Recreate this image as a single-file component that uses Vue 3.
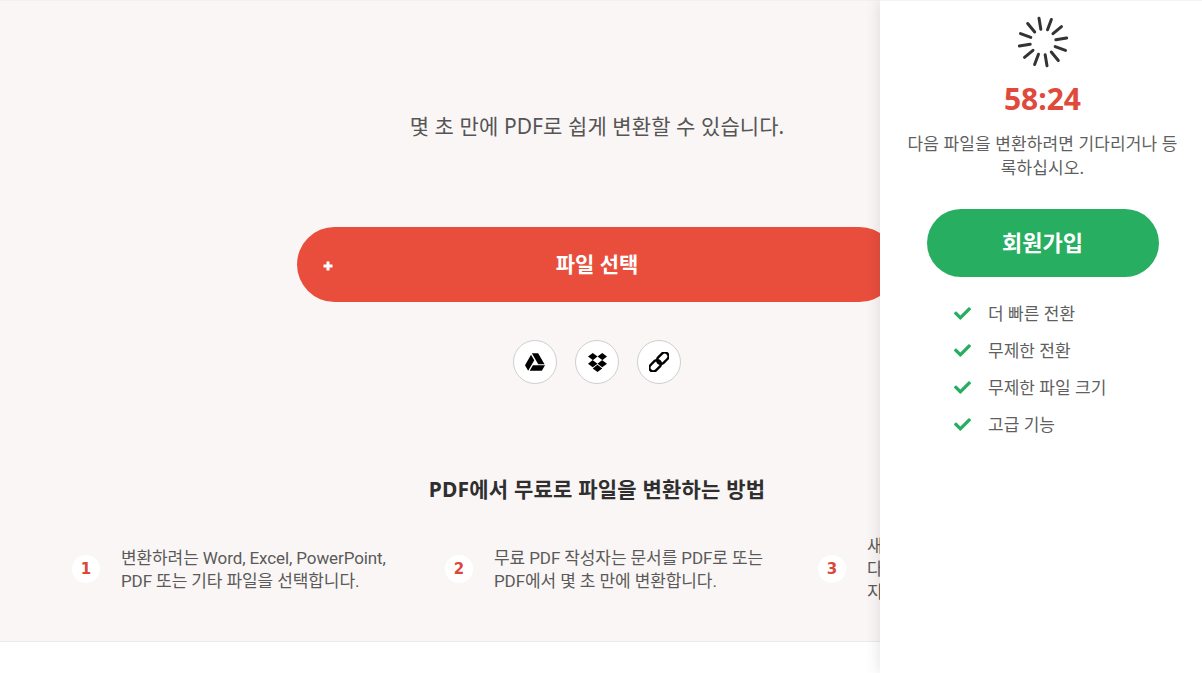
<script setup>
const ticks = Array.from({ length: 12 }, (_, i) => -9.6 + i * 30)
const steps = [
  { n: 1, lines: ['변환하려는 Word, Excel, PowerPoint,', 'PDF 또는 기타 파일을 선택합니다.'] },
  { n: 2, lines: ['무료 PDF 작성자는 문서를 PDF로 또는', 'PDF에서 몇 초 만에 변환합니다.'] },
  { n: 3, lines: ['새 문서를 컴퓨터에 저장하거나', '다른 사람과 공유하거나 드라이브에', '지금 바로 저장하십시오.'] }
]
const perks = ['더 빠른 전환', '무제한 전환', '무제한 파일 크기', '고급 기능']
</script>

<template>
  <div class="page">
    <section class="hero">
      <p class="sub">몇 초 만에 PDF로 쉽게 변환할 수 있습니다.</p>
      <button class="choose">
        <svg class="plus" viewBox="0 0 10 10"><path d="M5 .5v9M.5 5h9" /></svg>
        <span>파일 선택</span>
      </button>
      <div class="sources">
        <a class="src">
          <svg viewBox="0 0 512 512" width="20" height="20"><path d="M339 314.9L175.4 32h161.2l163.6 282.9H339zm-137.5 23.6L120.9 480h310.5L512 338.5H201.5zM154.1 67.4L0 338.5 80.6 480 237 208.8 154.1 67.4z" /></svg>
        </a>
        <a class="src">
          <svg viewBox="0 32 528 448" width="19" height="19" preserveAspectRatio="none"><path d="M264.4 116.3l-132 84.3 132 84.3-132 84.3L0 284.1l132.3-84.3L0 116.3 132.3 32l132.1 84.3zM131.6 395.7l132-84.3 132 84.3-132 84.3-132-84.3zm132.8-111.6l132-84.3-132-83.6L395.7 32 528 116.3l-132.3 84.3L528 284.8l-132.3 84.3-131.3-85z" /></svg>
        </a>
        <a class="src">
          <svg class="chain" viewBox="0 0 20 20" width="20" height="20">
            <rect x="-0.3" y="10" width="13" height="7.6" rx="3.8" transform="rotate(-45 6.2 13.8)" />
            <rect x="7.3" y="2.4" width="13" height="7.6" rx="3.8" transform="rotate(-45 13.8 6.2)" />
          </svg>
        </a>
      </div>
      <h2 class="how">PDF에서 무료로 파일을 변환하는 방법</h2>
      <div class="steps">
        <div v-for="s in steps" :key="s.n" class="step">
          <span class="num">{{ s.n }}</span>
          <p class="txt"><template v-for="(l, i) in s.lines" :key="i">{{ l }}<br /></template></p>
        </div>
      </div>
    </section>

    <aside class="side">
      <svg class="spin" viewBox="-26 -26 52 52" width="52" height="52">
        <line v-for="a in ticks" :key="a" x1="0" y1="-13" x2="0" y2="-24" :transform="`rotate(${a})`" />
      </svg>
      <div class="timer">58:24</div>
      <p class="wait">다음 파일을 변환하려면 기다리거나 등록하십시오.</p>
      <button class="signup">회원가입</button>
      <ul class="perks">
        <li v-for="p in perks" :key="p">
          <svg viewBox="0 0 512 512" width="17" height="17"><path d="M173.898 439.404l-166.4-166.4c-9.997-9.997-9.997-26.206 0-36.204l36.203-36.204c9.997-9.998 26.207-9.998 36.204 0L192 312.69 432.095 72.596c9.997-9.997 26.207-9.997 36.204 0l36.203 36.204c9.997 9.997 9.997 26.206 0 36.204l-294.4 294.401c-9.998 9.997-26.207 9.997-36.204-.001z" /></svg>
          <span>{{ p }}</span>
        </li>
      </ul>
    </aside>
  </div>
</template>

<style>
html, body { margin: 0; overflow: hidden; background: #fff; }
</style>

<style scoped>
.page {
  position: relative;
  height: 673px;
  overflow: hidden;
  font-family: "Noto Sans", "Noto Sans CJK KR", sans-serif;
  color: #555;
}
.hero {
  height: 642px;
  box-sizing: border-box;
  background: #faf6f5;
  border-top: 1px solid #f3f1f0;
  border-bottom: 1px solid #e9e9e9;
  padding-right: 8px;
  display: flex;
  flex-direction: column;
  align-items: center;
}
.sub {
  margin: 111px 0 0;
  font-size: 21px;
  letter-spacing: 0.08px;
  line-height: 28px;
  color: #555;
}
.choose {
  margin-top: 87px;
  width: 600px;
  height: 75px;
  border: 0;
  border-radius: 38px;
  background: #e94e3d;
  color: #fff;
  font: 700 21px "Noto Sans", "Noto Sans CJK KR", sans-serif;
  position: relative;
  padding: 0 0 4px;
}
.plus {
  position: absolute;
  left: 26px;
  top: 34px;
  width: 10px;
  height: 10px;
}
.plus path { stroke: #fff; stroke-width: 3; fill: none; }
.sources {
  margin-top: 38px;
  display: flex;
  gap: 18px;
}
.src {
  width: 44px;
  height: 44px;
  box-sizing: border-box;
  border: 1px solid #cfcfcf;
  border-radius: 50%;
  background: #fff;
  display: flex;
  align-items: center;
  justify-content: center;
}
.chain rect {
  fill: none;
  stroke: #000;
  stroke-width: 2.4;
}
.how {
  margin: 91px 0 0;
  font-size: 21px;
  letter-spacing: 0.2px;
  line-height: 28px;
  font-weight: 700;
  color: #2f2f2f;
}
.steps {
  align-self: flex-start;
  margin-top: 30px;
  padding-left: 72px;
  display: grid;
  grid-template-columns: repeat(3, 373px);
}
.step {
  display: flex;
  align-items: center;
  height: 72px;
}
.num {
  width: 28px;
  height: 28px;
  flex: none;
  border-radius: 50%;
  background: #fff;
  color: #d9483b;
  font: 700 15px/28px "DejaVu Sans", sans-serif;
  text-align: center;
}
.txt {
  margin: 0 0 0 21px;
  padding-top: 1px;
  font-family: Roboto, "Noto Sans CJK KR", sans-serif;
  font-size: 17px;
  letter-spacing: -0.1px;
  line-height: 23px;
  white-space: nowrap;
  color: #5a5a5a;
}
.side {
  position: absolute;
  top: 0;
  left: 880px;
  width: 322px;
  height: 673px;
  box-sizing: border-box;
  background: #fff;
  border-top: 1px solid #f3f3f3;
  box-shadow: 0 0 15px rgba(0, 0, 0, 0.12);
  padding: 15px 21px 0 24px;
  display: flex;
  flex-direction: column;
  align-items: center;
}
.spin line {
  stroke: #333;
  stroke-width: 3;
  stroke-linecap: round;
}
.timer {
  margin-top: 13px;
  font: 700 30px/36px "Noto Sans", sans-serif;
  color: #e04a3b;
}
.wait {
  margin: 15px 0 0;
  font-size: 17px;
  letter-spacing: 0.1px;
  line-height: 24px;
  text-align: center;
  color: #5f5f5f;
  word-break: break-all;
}
.signup {
  margin-top: 29px;
  width: 232px;
  height: 68px;
  border: 0;
  border-radius: 34px;
  background: #27ae60;
  color: #fff;
  font: 700 22px "Noto Sans", "Noto Sans CJK KR", sans-serif;
  padding: 0 0 5px;
}
.perks {
  list-style: none;
  margin: 18px 0 0 50px;
  padding: 0;
  align-self: flex-start;
}
.perks li {
  display: flex;
  align-items: center;
  height: 37px;
  font-size: 17px;
  color: #5f5f5f;
}
.perks svg { fill: #27ae60; flex: none; }
.perks span { margin-left: 17px; padding-bottom: 2px; }
</style>
